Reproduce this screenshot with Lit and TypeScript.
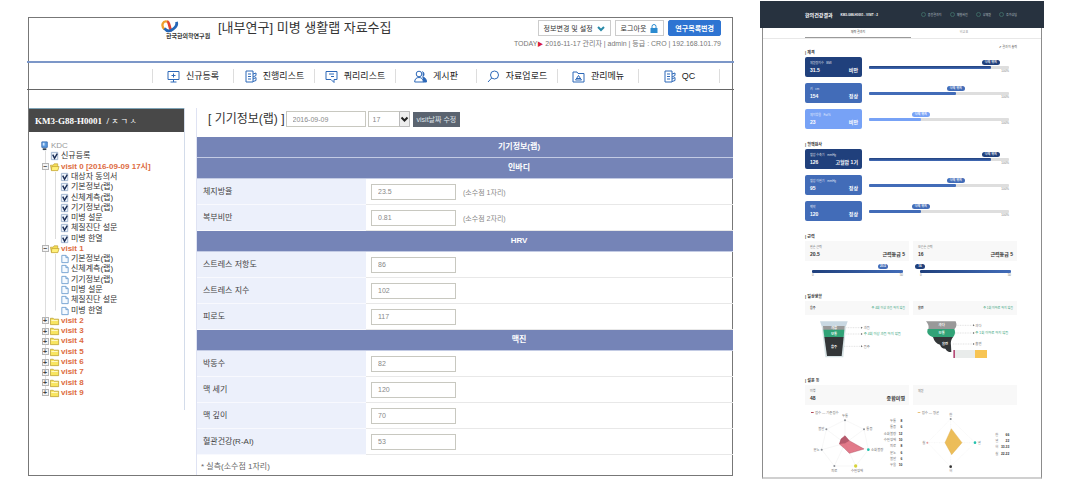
import { LitElement, html, svg, css } from "lit";
import { customElement } from "lit/decorators.js";
import { classMap } from "lit/directives/class-map.js";

type Node = { label: string; kind: "root" | "check" | "open" | "page" | "closed"; level: number; last?: boolean };

const survey = ["기본정보(랩)", "신체계측(랩)", "기기정보(랩)", "미병 설문", "체질진단 설문", "미병 한열"];

const tree: Node[] = [
  { label: "KDC", kind: "root", level: 0 },
  { label: "신규등록", kind: "check", level: 1 },
  { label: "visit 0 [2016-09-09 17시]", kind: "open", level: 1 },
  ...["대상자 동의서", ...survey].map((label, i): Node => ({ label, kind: "check", level: 2, last: i === 6 })),
  { label: "visit 1", kind: "open", level: 1 },
  ...survey.map((label, i): Node => ({ label, kind: "page", level: 2, last: i === 5 })),
  ...[2, 3, 4, 5, 6, 7, 8, 9].map((n): Node => ({ label: `visit ${n}`, kind: "closed", level: 1, last: n === 9 })),
];

const glyphs: Record<Node["kind"], unknown> = {
  root: svg`<path d="M2 1h6v6H2z" fill="#5b9be0" stroke="#3c6fb4"/><path d="M3 8h4v2H3z" fill="#345"/><path d="M3 2h2v3H3z" fill="#cfe6ff"/>`,
  check: svg`<path d="M1.5 1.5h7v8h-7z" fill="#eef4fb" stroke="#9ab0cc"/><path d="M3 4l2 4 3-5" fill="none" stroke="#1b2d55" stroke-width="1.6"/>`,
  open: svg`<path d="M.5 3.500h3l1-1.500h4v7H1.500z" fill="#f6de55" stroke="#b99a2c" stroke-width=".7"/><path d="M2 5h8l-1.500 4.500h-7z" fill="#fff07a" stroke="#b99a2c" stroke-width=".7"/>`,
  page: svg`<path d="M2 1.500h4.500L9 4v5.500H2z" fill="#f5faff" stroke="#6f9fd0"/><path d="M6.500 1.500V4H9" fill="none" stroke="#6f9fd0"/>`,
  closed: svg`<path d="M.5 2.500h3l1 1h5v6h-9z" fill="#f8e560" stroke="#b99a2c" stroke-width=".8"/><path d="M1.500 5h7" stroke="#fffbd0"/>`,
};

const doc = svg`<path d="M2 1h7v11H2z"/><path d="M4 4h3M4 6.500h3M4 9h3"/><path d="M9 4l3-1v2.500L9 7M9 9l3-1.500v3l-3 1"/>`;
const menu = [
  { label: "신규등록", icon: svg`<path d="M1 1.500h11v8H1z"/><path d="M6.500 3.500v4M4.500 5.500h4M3.500 12h6M6.500 9.500V12"/>` },
  { label: "진행리스트", icon: doc },
  { label: "쿼리리스트", icon: svg`<path d="M1 1.500h11v8H9v3l-3-3H1z"/><path d="M4 4h5M6 6.500h3"/>` },
  { label: "게시판", icon: svg`<path d="M8.500 1.500a2.500 3 0 0 1 0 5.500c2.500.5 4 2 4 5H9" fill="#2d68b8"/><circle cx="5" cy="4" r="2.800" fill="#fff"/><path d="M.7 12c0-3 1.600-4.500 4.300-4.500S9.300 9 9.300 12z" fill="#fff"/>` },
  { label: "자료업로드", icon: svg`<circle cx="7.500" cy="5" r="4"/><path d="M4.700 8L1 12"/>` },
  { label: "관리메뉴", icon: svg`<path d="M1 2h4l1 1.500h6V12H1z"/><path d="M3.500 10l3-4.500 3 4.500zM5 8.500h3"/>` },
  { label: "QC", icon: doc },
];

type Line = { head: string } | { label: string; value: string; note?: string };
const lines: Line[] = [
  { head: "기기정보(랩)" },
  { head: "인바디" },
  { label: "체지방율", value: "23.5", note: "(소수점 1자리)" },
  { label: "복부비만", value: "0.81", note: "(소수점 2자리)" },
  { head: "HRV" },
  { label: "스트레스 저항도", value: "86" },
  { label: "스트레스 지수", value: "102" },
  { label: "피로도", value: "117" },
  { head: "맥진" },
  { label: "박동수", value: "82" },
  { label: "맥 세기", value: "120" },
  { label: "맥 깊이", value: "70" },
  { label: "혈관건강(R-AI)", value: "53" },
];

@customElement("record-tree")
class RecordTree extends LitElement {
  static styles = css`
    :host { display: block; border-right: 1px solid #d3dcea; padding-bottom: 12px; font-size: 8px; }
    .who { margin: 0; background: #484848; color: #fff; font: bold 9px/24px "Liberation Serif", "Noto Sans CJK KR", serif; padding-left: 6px; white-space: pre; border-top: 1px solid #7fa3b5; height: 23px; }
    .who small { font: 8px "Noto Sans CJK KR", sans-serif; }
    ul { list-style: none; margin: 9px 0 0; padding: 0 0 0 11px; display: grid; grid-auto-rows: 1fr; min-height: 257px; }
    li { display: flex; align-items: center; height: 100%; min-height: 0; line-height: 10px; white-space: nowrap; }
    .rail { flex: none; width: 10px; align-self: stretch; display: grid; place-items: center; background: linear-gradient(#ddd, #ddd) 50% 0 / 1px 100% no-repeat; }
    .rail.end { background-size: 1px 50%; }
    .toggle { width: 7px; height: 7px; padding: 0; border: 1px solid #b5b5b5; background: #f4f4f4; color: #444; font: bold 7px/5px "Liberation Sans", sans-serif; display: block; }
    svg { flex: none; width: 10px; height: 10px; margin-right: 1px; }
    a { color: #333; text-decoration: none; }
    .root a { color: #999; }
    .visit a { color: #dd6c3f; font-weight: bold; }
  `;
  render() {
    return html`
      <h2 class="who">KM3-G88-H0001  / <small>ㅈ ㄱ ㅅ</small></h2>
      <ul>
        ${tree.map((n) => {
          const visit = n.kind === "open" || n.kind === "closed";
          return html`<li class=${classMap({ visit, root: n.kind === "root" })}>
            ${n.level > 0
              ? html`<span class=${classMap({ rail: true, end: n.level === 1 && !!n.last })}>
                  ${visit ? html`<button class="toggle" aria-label=${n.label}>${n.kind === "open" ? "−" : "+"}</button>` : ""}
                </span>`
              : ""}
            ${n.level > 1 ? html`<span class=${classMap({ rail: true, end: !!n.last })}></span>` : ""}
            <svg viewBox="0 0 11 11">${glyphs[n.kind]}</svg>
            <a href="#">${n.label}</a>
          </li>`;
        })}
      </ul>
    `;
  }
}

@customElement("device-form")
class DeviceForm extends LitElement {
  static styles = css`
    :host { display: block; border-left: 1px solid #dfe3f3; color: #666; font-size: 8px; }
    .bar { display: flex; align-items: center; height: 22px; padding: 0 0 7px 11px; }
    h1 { margin: 0 1px 0 0; font-size: 12px; line-height: 16px; font-weight: normal; color: #333; white-space: nowrap; }
    input, select { box-sizing: border-box; height: 16px; border: 1px solid #c8c8c0; background: #fff; color: #888; font: 7px "Liberation Sans", sans-serif; padding: 0 6px; margin: 0; border-radius: 0; }
    .date { width: 80px; }
    .hourbox { display: grid; margin: 0 3px 0 2px; }
    .hourbox > * { grid-area: 1 / 1; }
    .hour { width: 42px; appearance: none; padding: 0 4px; }
    .hourbox svg { justify-self: end; width: 11px; height: 16px; pointer-events: none; }
    .edit { height: 15px; padding: 0 4px; border: 0; background: #5b6470; color: #dfe3e8; font: 7px "Liberation Sans", "Noto Sans CJK KR", sans-serif; white-space: nowrap; }
    table { width: 100%; border-spacing: 0; table-layout: fixed; }
    .c1 { width: 169px; }
    th, td { padding: 0; box-sizing: border-box; }
    .head { height: 21px; background: #7584b7; color: #fff; font-weight: bold; text-align: center; padding-left: 108px; line-height: 12px; border-bottom: 1px solid #c3cbe4; }
    .name { height: 26px; background: #ecf0fb; text-align: left; font-weight: normal; padding-left: 6px; line-height: 12px; border-bottom: 1px solid #f8f9fe; }
    .name label { color: #444; }
    .cell { height: 26px; padding-left: 5px; border-bottom: 1px solid #e8e8e8; }
    .cell div { display: flex; align-items: center; gap: 7px; }
    .value { width: 85px; }
    .note { color: #888; font-size: 7px; }
    p { margin: 0; padding: 4px 0 0 4px; line-height: 16px; }
  `;
  render() {
    return html`
      <div class="bar">
        <h1>[ 기기정보(랩) ]</h1>
        <input class="date" aria-label="방문일" value="2016-09-09" />
        <span class="hourbox">
          <select class="hour" aria-label="시"><option>17</option></select>
          <svg viewBox="0 0 11 16"><path d="M.5.500h10v15H.5z" fill="#eee" stroke="#bbb" /><path d="M2.500 6.500l3 3 3-3" fill="none" stroke="#222" stroke-width="2" /></svg>
        </span>
        <button class="edit">visit날짜 수정</button>
      </div>
      <table>
        <colgroup><col class="c1" /><col /></colgroup>
        ${lines.map((l, i) =>
          "head" in l
            ? html`<tr><th class="head" colspan="2">${l.head}</th></tr>`
            : html`<tr>
                <th class="name" scope="row"><label for="v${i}">${l.label}</label></th>
                <td class="cell"><div><input class="value" id="v${i}" .value=${l.value} />${l.note ? html`<span class="note">${l.note}</span>` : ""}</div></td>
              </tr>`
        )}
      </table>
      <p>* 실측(소수점 1자리)</p>
    `;
  }
}

type Gauge = { name: string; value: string; grade: string; tone: string; fill: number };
const body: Gauge[] = [
  { name: "체질량지수   BMI", value: "31.5", grade: "비만", tone: "deep", fill: 87 },
  { name: "키   cm", value: "154", grade: "정상", tone: "mid", fill: 62 },
  { name: "체지방율   Fat%", value: "23", grade: "비만", tone: "soft", fill: 37 },
];
const blood: Gauge[] = [
  { name: "혈압 수축기   mmHg", value: "126", grade: "고혈압 1기", tone: "deep", fill: 87 },
  { name: "혈압 이완기   mmHg", value: "95", grade: "정상", tone: "mid", fill: 62 },
  { name: "맥박", value: "120", grade: "정상", tone: "mid", fill: 37 },
];

@customElement("health-report")
class HealthReport extends LitElement {
  static styles = css`
    :host { display: block; border: solid #8c8c8c; border-width: 0 1px 2px; border-bottom-color: #d0d0d0; margin: 0 2px; padding-bottom: 3px; font-size: 3px; line-height: 4px; color: #777; }
    header { margin: 0 -3px; padding: 0 27px 0 45px; height: 27px; background: #27323f; color: #fff; display: flex; align-items: center; gap: 8px; white-space: nowrap; border-bottom: 0; }
    h1 { margin: 0; font-size: 5px; line-height: 8px; }
    .id { font-weight: bold; font-size: 3px; }
    .tools { margin-left: auto; display: flex; gap: 8px; color: #b8c0c8; }
    .tools a { color: inherit; text-decoration: none; display: flex; align-items: center; gap: 2px; }
    .tools a::before { content: ""; width: 3px; height: 3px; border: 1px solid #3d6763; border-radius: 50%; }
    nav { display: grid; grid-template-columns: 1fr 1fr; padding: 0 24px 0 42px; border-bottom: 1px solid #e8e8e8; }
    nav a { height: 7px; padding-top: 2px; color: #999; text-decoration: none; text-align: center; border-bottom: 1px solid transparent; }
    nav .on { color: #444; border-color: #9a9a9a; }
    main { padding: 0 24px 0 42px; }
    .print { height: 10px; display: flex; align-items: flex-end; justify-content: flex-end; color: #555; }
    .print a { color: inherit; text-decoration: none; }
    section + section { margin-top: 12px; }
    h2 { margin: 0; height: 8px; font-size: 4px; line-height: 8px; color: #333; }
    .gauges { display: grid; gap: 6px; }
    .gauge { display: grid; grid-template-columns: 57px 1fr; gap: 7px; padding-right: 8px; }
    .card { box-sizing: border-box; height: 20px; border-radius: 2px; padding: 4px 4px 0 5px; color: #fff; }
    .card small { display: block; font-size: 3px; opacity: .8; white-space: pre; }
    .pair { display: flex; justify-content: space-between; align-items: baseline; font-weight: bold; font-size: 5px; line-height: 10px; }
    .deep { background: #20407c; }
    .mid { background: #426cb8; }
    .soft { background: #77a2f6; }
    .meter { padding-top: 3px; }
    .track { height: 3px; background: #dedede; border-radius: 1px; margin-top: 1px; }
    .fill { height: 3px; background: #426cb8; border-radius: 1px; }
    .deep.fill { background: linear-gradient(#20407c, #426cb8); }
    .soft.fill { background: #77a2f6; }
    .tag { display: block; width: 18px; margin-left: -9px; border-radius: 3px; color: #fff; text-align: center; font-weight: bold; line-height: 5px; height: 5px; white-space: nowrap; }
    .max { text-align: right; line-height: 5px; }
    .halves { display: grid; grid-template-columns: 1fr 1fr; gap: 4px; }
    .box { box-sizing: border-box; height: 20px; padding: 4px 4px 0 5px; background: #f8f8f8; }
    .box .pair { color: #333; }
    .flat { height: 14px; padding-top: 5px; display: flex; justify-content: space-between; }
    .flat b { color: #333; }
    .good { color: #35a37b; }
    .grip { height: 17px; padding: 3px 6px 0 7px; }
    .grip .tag { width: 10px; margin-left: -5px; }
    .grip .track { background: linear-gradient(90deg, #20407c, #426cb8); }
    .ends { display: flex; justify-content: space-between; line-height: 5px; }
    svg { display: block; width: 100%; height: auto; }
    svg text { font-size: 10px; fill: #777; }
    svg .in { fill: #fff; font-weight: bold; text-anchor: middle; }
    svg .ok { fill: #35a37b; }
    svg .num { fill: #333; font-weight: bold; text-anchor: end; }
    svg .mid-label { text-anchor: middle; }
    svg .end-label { text-anchor: end; }
  `;

  gauge(g: Gauge) {
    return html`<div class="gauge">
      <div class="card ${g.tone}"><small>${g.name}</small><div class="pair"><span>${g.value}</span><span>${g.grade}</span></div></div>
      <div class="meter">
        <div style="padding-left:${g.fill}%"><span class="tag ${g.tone}">나의 위치</span></div>
        <div class="track"><div class="fill ${g.tone}" style="width:${g.fill}%"></div></div>
        <div class="max">100%</div>
      </div>
    </div>`;
  }

  grip(name: string, value: string, at: number, tone: string) {
    return html`<div>
      <div class="box">${name}<div class="pair"><span>${value}</span><span>근력등급 5</span></div></div>
      <div class="grip">
        <div style="padding-left:${at}%"><span class="tag ${tone}">${value}</span></div>
        <div class="track"></div>
        <div class="ends"><span>0</span><span>50</span></div>
      </div>
    </div>`;
  }

  render() {
    const scores: [string, string][] = [["두통", "8"], ["통증", "6"], ["소화불량", "12"], ["수면장애", "10"], ["피로", "8"], ["분노", "6"], ["불안", "6"], ["우울", "10"]];
    const traits: [string, string][] = [["한", "66"], ["열", "22"], ["허", "33.33"], ["실", "22.22"]];
    return html`
      <header>
        <h1>한의건강결과</h1><span class="id">KM3-G88-H0001 - VISIT : 2</span>
        <div class="tools"><a href="#">종합결과지</a><a href="#">체형사진</a><a href="#">상체질</a><a href="#">추가상담</a></div>
      </header>
      <nav><a class="on" href="#">체력 결과지</a><a href="#">비교표</a></nav>
      <main>
        <div class="print"><a href="#">✐ 결과지 출력</a></div>
        <section><h2>| 체격</h2><div class="gauges">${body.map((g) => this.gauge(g))}</div></section>
        <section><h2>| 혈액검사</h2><div class="gauges">${blood.map((g) => this.gauge(g))}</div></section>
        <section><h2>| 근력</h2><div class="halves">${this.grip("왼손 근력", "20.5", 78, "mid")}${this.grip("오른손 근력", "16", 0, "deep")}</div></section>
        <section>
          <h2>| 일상생활</h2>
          <div class="halves">
            <div class="box flat"><b>음주</b><span class="good">주 4회 이상 과음 하지 않음</span></div>
            <div class="box flat"><b>흡연</b><span class="good">주 1회 이하로 하지 않음</span></div>
          </div>
          <svg viewBox="30 165 636 150">
            <path d="M75 184h83l-5 15H80z" fill="#c9d8e2" />
            <path d="M80 198h73l-8 94H91z" fill="#d7e3e5" />
            <path d="M84 198h65l-1 12H85z" fill="#999" />
            <path d="M85 209h63l-2 23H88z" fill="#31a377" />
            <path d="M88 231h58l-6 57H96z" fill="#333638" />
            <path d="M393 184h89q6 14-4 24h-78q4-12-7-24z" fill="#999" />
            <path d="M398 207h80q6 14-4 25h-60q-22-8-16-25z" fill="#31a377" />
            <path d="M414 231h60q-9 12-6 26l1 19q-12 1-18-10-12 0-16-12-16-4-21-23z" fill="#333638" />
            <path d="M475 270h5v24h-5z" fill="#b64d78" />
            <path d="M480 270h60v24h-60z" fill="#e9eceb" />
            <path d="M540 270h36v24h-36z" fill="#f7c453" />
            <path d="M154 203h44M154 222h44M147 259h52M485 196h50M480 219h54M474 252h60" stroke="#aaa" stroke-dasharray="3 2" />
            <path d="M198 200v6l5-3zM198 219v6l5-3zM198 256v6l5-3zM534 193v6l5-3zM534 216v6l5-3zM534 249v6l5-3z" fill="#666" />
            <text class="in" x="117" y="208">과음</text><text class="in" x="117" y="225">보통</text><text class="in" x="117" y="263">음주</text>
            <text class="in" x="440" y="199">과다</text><text class="in" x="440" y="222">보통</text><text class="in" x="450" y="255">흡연</text>
            <text x="206" y="207">과음</text><text class="ok" x="206" y="226">주 4회 이상 과음 하지 않음</text><text x="206" y="263">음주</text>
            <text x="541" y="200">과다</text><text class="ok" x="541" y="222">주 1회 이하로 하지 않음</text><text x="541" y="256">흡연</text>
          </svg>
        </section>
        <section>
          <h2>| 설문 등</h2>
          <div class="halves">
            <div class="box">미병<div class="pair"><span>48</span><span>종합미병</span></div></div>
            <div class="box">체질</div>
          </div>
          <svg viewBox="30 105 636 206">
            <path d="M150 150l57 28 13 61-38 49h-64l-38-49 14-61zM150 150v70M207 178l-57 42 70 19M182 288l-32-68-32 68M80 239l70-19-56-42" fill="none" stroke="#e6e6e6" />
            <path d="M150 197l13 15 44 25-44 13-15-15-15-13 5-15z" fill="#d64258" fill-opacity=".7" stroke="#9c2f44" />
            <path d="M150 197l13 15-13 8-17 2 5-15z" fill="#8c3a50" fill-opacity=".5" />
            <path d="M467 147l73 71-73 72-70-72zM467 147v143M397 218h143" fill="none" stroke="#e6e6e6" stroke-dasharray="3 2" />
            <path d="M469 176l32 42-31 36-20-36z" fill="#e9b23c" fill-opacity=".85" stroke="#d9a640" />
            <g fill="#8a8f96">
              <circle cx="150" cy="151" r="3" /><circle cx="207" cy="178" r="3" /><circle cx="118" cy="288" r="3" /><circle cx="80" cy="239" r="3" /><circle cx="94" cy="178" r="3" />
              <circle cx="467" cy="147" r="3" /><circle cx="397" cy="218" r="3" fill="#e59a9a" /><circle cx="467" cy="290" r="4" fill="#333" />
              <circle cx="220" cy="239" r="4" fill="#22c1ad" /><circle cx="182" cy="288" r="5" fill="#d7d33a" /><circle cx="540" cy="218" r="4" fill="#22c1ad" />
            </g>
            <path d="M48 126h8v3h-8z" fill="#b04a5a" /><text x="60" y="131">점수 — 기준점수</text>
            <path d="M368 126h8v3h-8z" fill="#e9c27a" /><text x="380" y="131">점수 — 평균</text>
            <text class="mid-label" x="150" y="142">두통</text><text x="214" y="181">통증</text><text x="228" y="243">소화불량</text>
            <text class="mid-label" x="186" y="305">수면장애</text><text class="mid-label" x="118" y="305">피로</text><text class="end-label" x="74" y="243">분노</text><text class="end-label" x="88" y="181">불안</text>
            <text class="mid-label" x="467" y="138">한</text><text class="end-label" x="391" y="222">실</text><text x="548" y="222">열</text><text class="mid-label" x="467" y="306">허</text>
            ${scores.map(([k, v], i) => svg`<text class="end-label" x="303" y=${156 + i * 19}>${k}</text><text class="num" x="322" y=${156 + i * 19}>${v}</text>`)}
            ${traits.map(([k, v], i) => svg`<text x="601" y=${197 + i * 19}>${k}</text><text class="num" x="643" y=${197 + i * 19}>${v}</text>`)}
          </svg>
        </section>
      </main>
    `;
  }
}

@customElement("app-root")
class AppRoot extends LitElement {
  static styles = css`
    :host { display: block; background: #fff; font-family: "Liberation Sans", "Noto Sans CJK KR", sans-serif; }
    .page { display: grid; grid-template-columns: 706fr 284fr; gap: 27px; padding: 1px 27px 0; align-items: start; }
    .frame { border: 1px solid #777; margin: 16px 0 0 1px; }
    .top { display: flex; justify-content: space-between; height: 43px; padding: 0 11px 0 131px; }
    .brand { display: flex; gap: 6px; padding-top: 1px; }
    .logo { width: 52px; padding-top: 1px; color: #333; font-size: 6px; line-height: 7px; font-weight: bold; white-space: nowrap; }
    .logo svg { display: block; width: 20px; height: 13px; }
    .logo span { display: block; padding-left: 6px; }
    h1 { margin: 0; font-size: 13px; line-height: 18px; font-weight: normal; color: #333; white-space: nowrap; }
    .account { padding-top: 2px; color: #777; }
    .buttons { display: flex; justify-content: flex-end; gap: 4px; }
    .buttons button { height: 16px; display: flex; align-items: center; justify-content: center; gap: 4px; padding: 0 5px; border: 1px solid #ccc; background: #fff; color: #333; font: 7px "Liberation Sans", "Noto Sans CJK KR", sans-serif; white-space: nowrap; }
    .buttons .main { background: #2e74d2; border-color: #2e74d2; color: #fff; font-weight: bold; border-radius: 2px; padding: 0 6px; }
    .buttons svg { width: 8px; height: 9px; }
    .today { margin: 3px 0 0; font-size: 7px; line-height: 10px; white-space: pre; text-align: right; }
    .today b { color: #d8203a; font-weight: normal; font-size: 6px; }
    nav { display: grid; grid-template-columns: repeat(7, 81fr) 15fr; padding-left: 125px; margin: 0 -2px; height: 26px; border-top: 2px solid #7c97c8; border-bottom: 1px solid #666; }
    nav a { display: flex; align-items: center; justify-content: center; gap: 6px; margin: 6px 0; border-left: 1px solid #ddd; color: #222; font-size: 9px; line-height: 14px; text-decoration: none; white-space: nowrap; }
    nav i { border-left: 1px solid #ddd; margin: 6px 0; }
    nav svg { width: 13px; height: 13px; fill: none; stroke: #2d68b8; }
    .work { display: grid; grid-template-columns: 156px 1fr; gap: 11px; padding-top: 18px; align-items: start; }
    device-form { margin-right: -1px; }
  `;
  render() {
    return html`<div class="page">
      <div class="frame">
        <div class="top">
          <div class="brand">
            <div class="logo">
              <svg viewBox="0 0 20 14"><path d="M8 2C2 0 0 6 4 10" fill="none" stroke="#f0a02c" stroke-width="2.500" /><path d="M7 2c3 0 2 9 5 9" fill="none" stroke="#e2432f" stroke-width="3" /><path d="M4 9c3 4 7 3 9 1 3-2 5-5 4-8" fill="none" stroke="#2667b7" stroke-width="3" /></svg>
              <span>한국한의학연구원</span>
            </div>
            <h1>[내부연구] 미병 생활랩 자료수집</h1>
          </div>
          <div class="account">
            <div class="buttons">
              <button>정보변경 및 설정 <svg viewBox="0 0 8 9"><path d="M1 3l3 3 3-3" fill="none" stroke="#2a8aa8" stroke-width="2" /></svg></button>
              <button>로그아웃 <svg viewBox="0 0 8 9"><path d="M2 4V2.500a2 2 0 0 1 4 0V4" fill="none" stroke="#2b8bd0" /><path d="M.5 4h7v5h-7z" fill="#2b8bd0" /></svg></button>
              <button class="main">연구목록변경</button>
            </div>
            <p class="today">TODAY<b>▶</b> 2016-11-17 관리자 | admin | 등급 : CRO | 192.168.101.79</p>
          </div>
        </div>
        <nav>${menu.map((m) => html`<a href="#"><svg viewBox="0 0 13 13">${m.icon}</svg>${m.label}</a>`)}<i></i></nav>
        <div class="work"><record-tree></record-tree><device-form></device-form></div>
      </div>
      <health-report></health-report>
    </div>`;
  }
}
